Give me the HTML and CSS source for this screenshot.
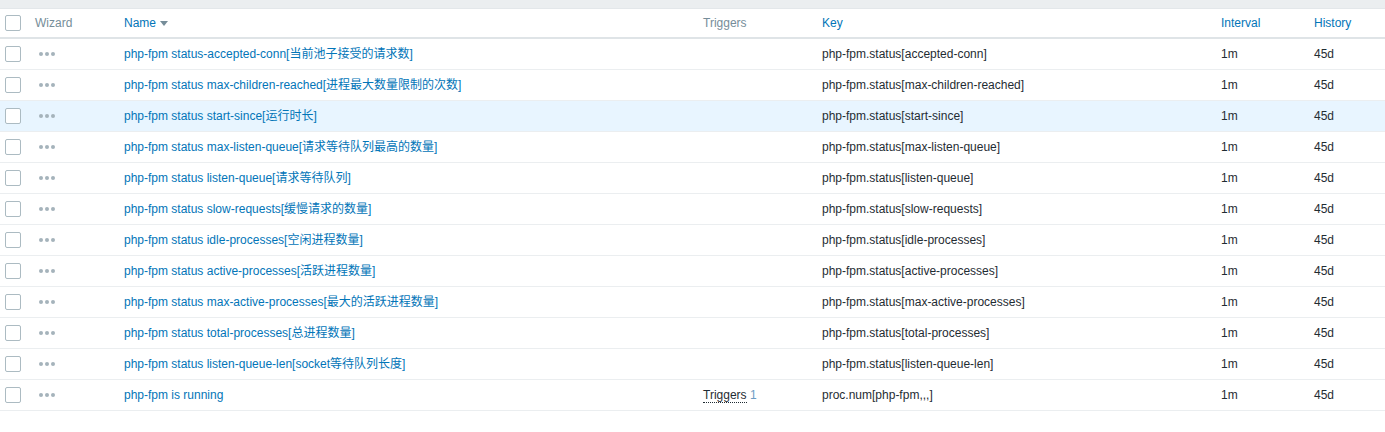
FILE: index.html
```html
<!DOCTYPE html>
<html>
<head>
<meta charset="utf-8">
<link rel="stylesheet" href="styles.css">
</head>
<body>
<div class="topbar"></div>
<table class="list">
  <colgroup>
    <col class="c-check"><col class="c-wiz"><col class="c-name"><col class="c-trig"><col class="c-key"><col class="c-int"><col class="c-hist">
  </colgroup>
  <thead>
    <tr>
      <th><span class="cb"></span></th>
      <th class="muted">Wizard</th>
      <th><a class="sort">Name</a><span class="arrow"></span></th>
      <th class="muted">Triggers</th>
      <th><a class="sort">Key</a></th>
      <th><a class="sort">Interval</a></th>
      <th><a class="sort">History</a></th>
    </tr>
  </thead>
  <tbody>
    <tr><td><span class="cb"></span></td><td><span class="dots"><i></i><i></i><i></i></span></td><td><a class="link">php-fpm status-accepted-conn[当前池子接受的请求数]</a></td><td></td><td>php-fpm.status[accepted-conn]</td><td>1m</td><td>45d</td></tr>
    <tr><td><span class="cb"></span></td><td><span class="dots"><i></i><i></i><i></i></span></td><td><a class="link">php-fpm status max-children-reached[进程最大数量限制的次数]</a></td><td></td><td>php-fpm.status[max-children-reached]</td><td>1m</td><td>45d</td></tr>
    <tr class="hover"><td><span class="cb"></span></td><td><span class="dots"><i></i><i></i><i></i></span></td><td><a class="link">php-fpm status start-since[运行时长]</a></td><td></td><td>php-fpm.status[start-since]</td><td>1m</td><td>45d</td></tr>
    <tr><td><span class="cb"></span></td><td><span class="dots"><i></i><i></i><i></i></span></td><td><a class="link">php-fpm status max-listen-queue[请求等待队列最高的数量]</a></td><td></td><td>php-fpm.status[max-listen-queue]</td><td>1m</td><td>45d</td></tr>
    <tr><td><span class="cb"></span></td><td><span class="dots"><i></i><i></i><i></i></span></td><td><a class="link">php-fpm status listen-queue[请求等待队列]</a></td><td></td><td>php-fpm.status[listen-queue]</td><td>1m</td><td>45d</td></tr>
    <tr><td><span class="cb"></span></td><td><span class="dots"><i></i><i></i><i></i></span></td><td><a class="link">php-fpm status slow-requests[缓慢请求的数量]</a></td><td></td><td>php-fpm.status[slow-requests]</td><td>1m</td><td>45d</td></tr>
    <tr><td><span class="cb"></span></td><td><span class="dots"><i></i><i></i><i></i></span></td><td><a class="link">php-fpm status idle-processes[空闲进程数量]</a></td><td></td><td>php-fpm.status[idle-processes]</td><td>1m</td><td>45d</td></tr>
    <tr><td><span class="cb"></span></td><td><span class="dots"><i></i><i></i><i></i></span></td><td><a class="link">php-fpm status active-processes[活跃进程数量]</a></td><td></td><td>php-fpm.status[active-processes]</td><td>1m</td><td>45d</td></tr>
    <tr><td><span class="cb"></span></td><td><span class="dots"><i></i><i></i><i></i></span></td><td><a class="link">php-fpm status max-active-processes[最大的活跃进程数量]</a></td><td></td><td>php-fpm.status[max-active-processes]</td><td>1m</td><td>45d</td></tr>
    <tr><td><span class="cb"></span></td><td><span class="dots"><i></i><i></i><i></i></span></td><td><a class="link">php-fpm status total-processes[总进程数量]</a></td><td></td><td>php-fpm.status[total-processes]</td><td>1m</td><td>45d</td></tr>
    <tr><td><span class="cb"></span></td><td><span class="dots"><i></i><i></i><i></i></span></td><td><a class="link">php-fpm status listen-queue-len[socket等待队列长度]</a></td><td></td><td>php-fpm.status[listen-queue-len]</td><td>1m</td><td>45d</td></tr>
    <tr><td><span class="cb"></span></td><td><span class="dots"><i></i><i></i><i></i></span></td><td><a class="link">php-fpm is running</a></td><td><a class="alt">Triggers</a> <sup class="count">1</sup></td><td>proc.num[php-fpm,,,]</td><td>1m</td><td>45d</td></tr>
  </tbody>
</table>
</body>
</html>
```
FILE: styles.css
```css
html, body {
  margin: 0;
  padding: 0;
  background: #ffffff;
}
body {
  font-family: "Liberation Sans", Arial, "Noto Sans CJK SC", sans-serif;
  font-size: 12px;
  line-height: 14px;
  color: #1f2c33;
}
.topbar {
  height: 8px;
  background: #ebeef0;
  border-bottom: 1px solid #e3e7ea;
}
.list {
  width: 100%;
  border-collapse: collapse;
  table-layout: fixed;
}
.c-check { width: 30px; }
.c-wiz { width: 89px; }
.c-name { width: 579px; }
.c-trig { width: 119px; }
.c-key { width: 399px; }
.c-int { width: 93px; }
.c-hist { width: auto; }
th, td {
  text-align: left;
  padding: 0 5px;
  white-space: nowrap;
  overflow: hidden;
  font-weight: normal;
}
thead th {
  height: 28px;
  border-bottom: 2px solid #dfe4e7;
  vertical-align: middle;
}
tbody td {
  height: 30px;
  border-bottom: 1px solid #ebeef0;
  vertical-align: middle;
}
tbody tr.hover td {
  background: #e8f5ff;
}
.muted { color: #768d99; }
.sort, .link {
  color: #0275b8;
  text-decoration: none;
}
.arrow {
  display: inline-block;
  width: 0;
  height: 0;
  margin-left: 4px;
  border-left: 4px solid transparent;
  border-right: 4px solid transparent;
  border-top: 5px solid #768d99;
  vertical-align: middle;
}
.cb {
  display: block;
  width: 14px;
  height: 14px;
  border: 1px solid #acbbc2;
  border-radius: 2px;
  background: #fff;
}
.dots {
  display: flex;
  gap: 2px;
  margin-left: 4px;
}
.dots i {
  display: block;
  width: 4px;
  height: 4px;
  border-radius: 50%;
  background: #a5b3bb;
}
.alt {
  color: #1f2c33;
  text-decoration: none;
  border-bottom: 1px dotted #1f2c33;
}
.count {
  color: #6c9cc4;
  font-size: 12px;
  vertical-align: baseline;
}
```
